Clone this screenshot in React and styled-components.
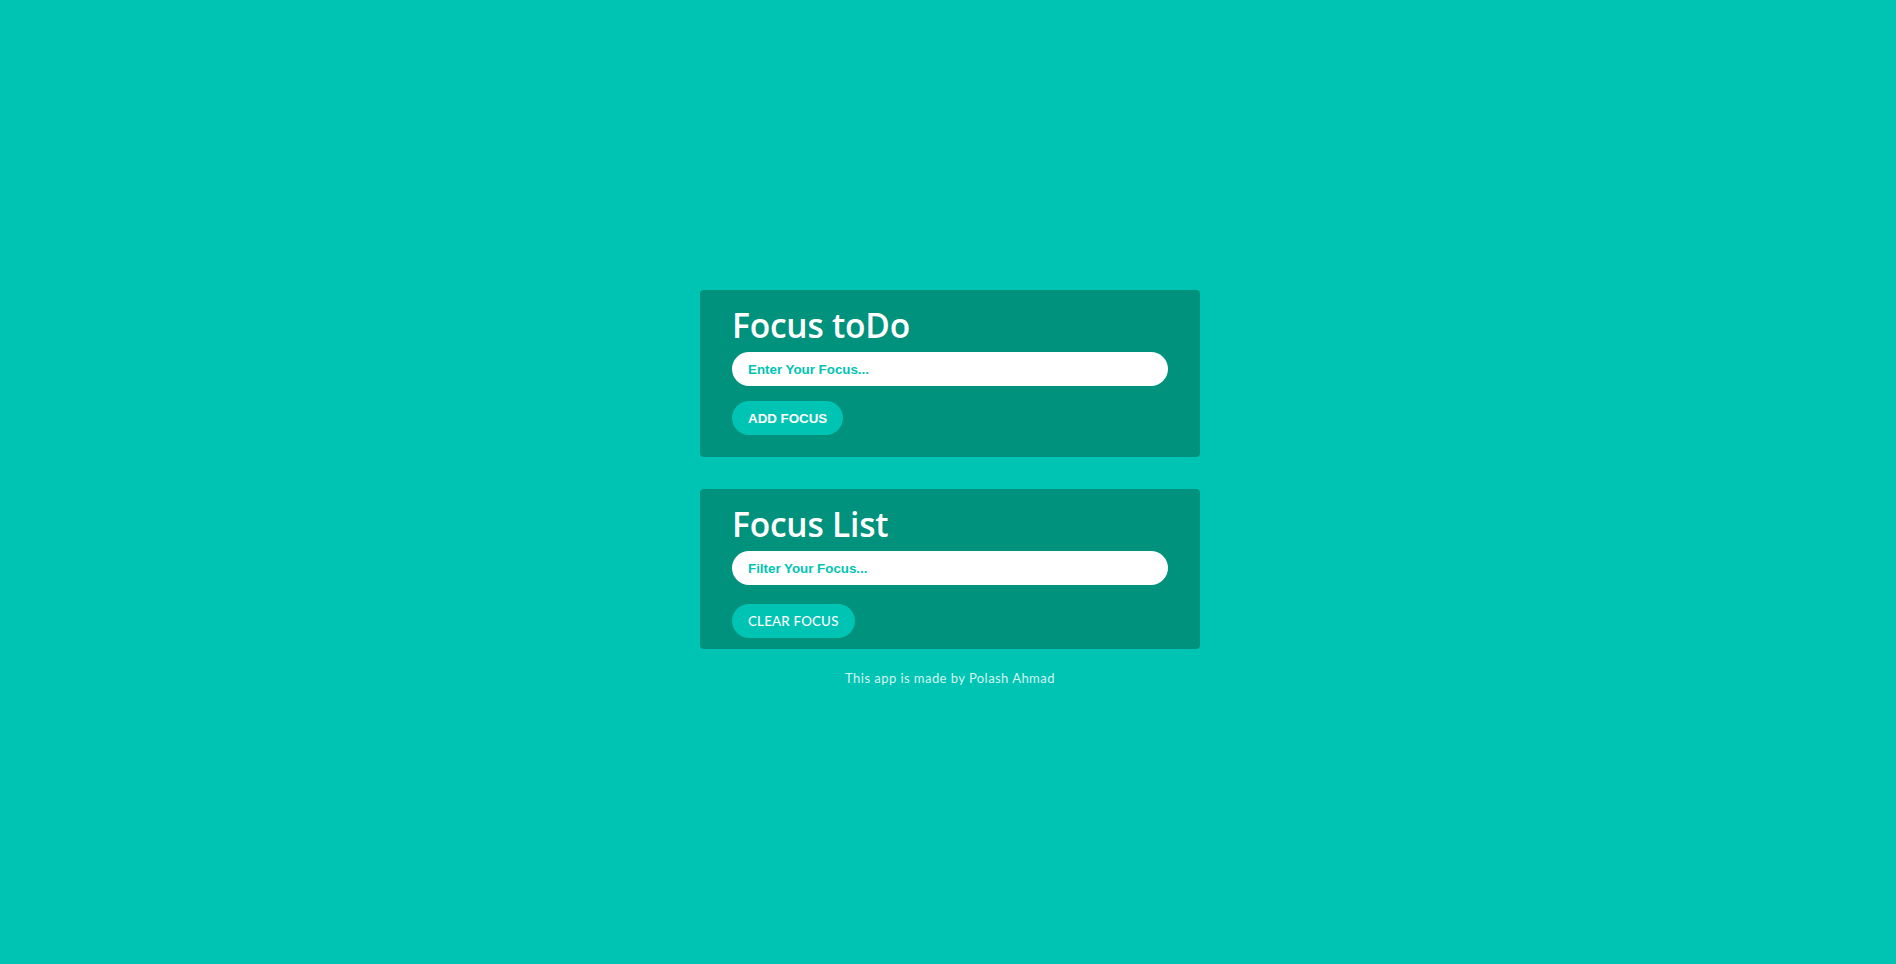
import styled, { createGlobalStyle } from "styled-components";

const GlobalStyle = createGlobalStyle`
  * {
    box-sizing: border-box;
  }
  body {
    margin: 0;
    background-color: #00c4b3;
    font-family: "Liberation Sans", Arial, sans-serif;
  }
`;

const Page = styled.div`
  display: flex;
  flex-direction: column;
  align-items: center;
  padding: 290px 0 0 4px;
  height: 964px;
  overflow: hidden;
`;

const Card = styled.div`
  width: 500px;
  background-color: #00927c;
  border-radius: 4px;
  padding: 0 32px ${(props) => props.$bottom}px;
  margin-bottom: 32px;
`;

const Title = styled.h1`
  margin: 0;
  padding-top: 11px;
  font-family: "Open Sans", "Noto Sans", sans-serif;
  font-weight: 600;
  font-size: 33.5px;
  line-height: 48px;
  color: white;
  letter-spacing: -0.2px;
`;

const Input = styled.input`
  display: block;
  width: 100%;
  height: 34px;
  margin-top: 3px;
  border: none;
  outline: none;
  border-radius: 17px;
  padding: 0 16px;
  background: white;
  font-family: "Liberation Sans", Arial, sans-serif;
  font-weight: bold;
  font-size: 13.33px;
  color: #00c4b3;
  &::placeholder {
    color: #00c4b3;
  }
`;

const Button = styled.button`
  display: block;
  height: 34px;
  margin-top: ${(props) => props.$top}px;
  padding: 0 16px;
  border: none;
  border-radius: 17px;
  background-color: #00c4b3;
  color: white;
  font-family: ${(props) =>
    props.$light ? `"Lato", "Noto Sans", sans-serif` : `"Liberation Sans", Arial, sans-serif`};
  font-weight: ${(props) => (props.$light ? 500 : "bold")};
  font-size: 13.33px;
  letter-spacing: ${(props) => (props.$light ? "0.2px" : "0")};
  cursor: pointer;
`;

const Credit = styled.div`
  margin-top: -11px;
  font-family: "Lato", "Noto Sans", sans-serif;
  font-size: 13px;
  letter-spacing: 0.45px;
  color: #d4f4ef;
`;

const App = () => {
  return (
    <>
      <GlobalStyle />
      <Page>
        <Card $bottom={22}>
          <Title>Focus toDo</Title>
          <Input placeholder="Enter Your Focus..." />
          <Button $top={15}>ADD FOCUS</Button>
        </Card>
        <Card $bottom={11}>
          <Title>Focus List</Title>
          <Input placeholder="Filter Your Focus..." />
          <Button $top={19} $light>
            CLEAR FOCUS
          </Button>
        </Card>
        <Credit>This app is made by Polash Ahmad</Credit>
      </Page>
    </>
  );
};

export default App;
